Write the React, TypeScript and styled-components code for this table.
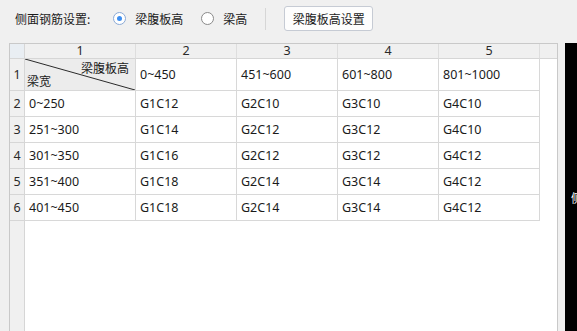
import React from 'react';
import styled, {createGlobalStyle} from 'styled-components';

const GlobalStyle = createGlobalStyle`
    html, body {
        margin: 0;
        padding: 0;
        background: #f0f0f0;
        overflow: hidden;
    }
    body {
        font-family: "Noto Sans CJK SC", "Noto Sans", sans-serif;
        color: #1b1b1b;
    }
`

const CJK = `"Noto Sans CJK SC", sans-serif`
const LATIN = `"Noto Sans", "Noto Sans CJK SC", sans-serif`

const HEADS = ['1', '2', '3', '4', '5']
const ROWS = [
    ['0~250', 'G1C12', 'G2C10', 'G3C10', 'G4C10'],
    ['251~300', 'G1C14', 'G2C12', 'G3C12', 'G4C10'],
    ['301~350', 'G1C16', 'G2C12', 'G3C12', 'G4C12'],
    ['351~400', 'G1C18', 'G2C14', 'G3C14', 'G4C12'],
    ['401~450', 'G1C18', 'G2C14', 'G3C14', 'G4C12'],
]
const RANGES = ['0~450', '451~600', '601~800', '801~1000']

const Page = styled.div`
    display: flex;
    flex-direction: column;
    width: 577px;
    height: 331px;
`

const Toolbar = styled.div`
    display: flex;
    align-items: center;
    height: 37px;
    padding: 0 0 0 15px;
    margin-bottom: 6px;
    font-family: ${CJK};
    font-size: 12px;
`

const Label = styled.span`
    margin-right: 23px;
`

const RadioOption = styled.label`
    display: flex;
    align-items: center;
    gap: 9px;
    margin-right: 18px;
`

const RadioCircle = styled.span<{ $checked?: boolean }>`
    width: 11px;
    height: 11px;
    border-radius: 50%;
    border: 1px solid ${p => p.$checked ? '#8aa9d6' : '#8a8a8a'};
    background: #fff;
    display: flex;
    align-items: center;
    justify-content: center;

    &::after {
        content: '';
        width: 5px;
        height: 5px;
        border-radius: 50%;
        background: ${p => p.$checked ? '#3d8ef0' : 'transparent'};
    }
`

const Divider = styled.span`
    width: 1px;
    height: 22px;
    background: #d6d6d6;
    margin: 0 18px 0 0;
`

const Button = styled.button`
    height: 25px;
    width: 89px;
    padding: 0;
    border: 1px solid #c6cbd4;
    border-radius: 3px;
    background: #fdfdfd;
    font-family: ${CJK};
    font-size: 12px;
    color: #1b1b1b;
`

const Body = styled.div`
    display: flex;
    flex: 1;
    min-height: 0;
`

const GridFrame = styled.div`
    margin-left: 9px;
    width: 550px;
    height: 300px;
    box-sizing: border-box;
    border: 1px solid #c9c9c9;
    background: #fff;
    display: grid;
    grid-template-columns: 15px 111px repeat(4, 101px) 1fr;
    grid-template-rows: 15px 32px repeat(5, 26px) 1fr;
    font-family: ${LATIN};
    font-size: 12.5px;
`

const Corner = styled.div`
    background: #e9eef3;
    border-right: 1px solid #d6d6d6;
    border-bottom: 1px solid #d6d6d6;
`

const HeadCell = styled.div<{ $filler?: boolean }>`
    background: #f0f0f0;
    border-right: ${p => p.$filler ? 'none' : '1px solid #dedede'};
    border-bottom: 1px solid #d6d6d6;
    display: flex;
    align-items: center;
    justify-content: center;
    color: #2a2a2a;
    font-size: 12.5px;
    line-height: 1;
`

const RowHead = styled.div`
    background: #f0f0f0;
    border-right: 1px solid #d6d6d6;
    border-bottom: 1px solid #d6d6d6;
    display: flex;
    align-items: center;
    justify-content: center;
    color: #2a2a2a;
`

const RowHeadFiller = styled.div`
    background: #f0f0f0;
    border-right: 1px solid #d6d6d6;
`

const Cell = styled.div<{ $filler?: boolean }>`
    border-right: ${p => p.$filler ? 'none' : '1px solid #d8d8d8'};
    border-bottom: ${p => p.$filler ? 'none' : '1px solid #d8d8d8'};
    display: flex;
    align-items: center;
    padding-left: 4px;
    white-space: nowrap;
`

const DiagonalCell = styled.div`
    position: relative;
    background: #ececec;
    border-right: 1px solid #d8d8d8;
    border-bottom: 1px solid #d8d8d8;
    font-family: ${CJK};
    font-size: 12px;
`

const DiagLine = styled.svg`
    position: absolute;
    inset: 0;
    width: 100%;
    height: 100%;
`

const DiagTop = styled.span`
    position: absolute;
    right: 6px;
    top: 0;
    line-height: 18px;
`

const DiagBottom = styled.span`
    position: absolute;
    left: 2px;
    bottom: 0;
    line-height: 18px;
`

const SidePanel = styled.div`
    margin-left: 7px;
    width: 12px;
    height: 300px;
    background: #000;
    overflow: hidden;
    display: flex;
    align-items: flex-start;
    padding-top: 146px;
    box-sizing: border-box;
`

const SideText = styled.span`
    color: #fff;
    font-family: ${CJK};
    font-size: 12px;
    margin-left: 6px;
    white-space: nowrap;
`

export default function App() {
    return (
        <Page>
            <GlobalStyle/>
            <Toolbar>
                <Label>侧面钢筋设置:</Label>
                <RadioOption><RadioCircle $checked/>梁腹板高</RadioOption>
                <RadioOption><RadioCircle/>梁高</RadioOption>
                <Divider/>
                <Button>梁腹板高设置</Button>
            </Toolbar>
            <Body>
                <GridFrame>
                    <Corner/>
                    {HEADS.map(h => <HeadCell key={h}>{h}</HeadCell>)}
                    <HeadCell $filler/>

                    <RowHead>1</RowHead>
                    <DiagonalCell>
                        <DiagLine viewBox="0 0 110 31" preserveAspectRatio="none">
                            <line x1="0" y1="0" x2="110" y2="31" stroke="#2a2a2a" strokeWidth="1"/>
                        </DiagLine>
                        <DiagTop>梁腹板高</DiagTop>
                        <DiagBottom>梁宽</DiagBottom>
                    </DiagonalCell>
                    {RANGES.map(r => <Cell key={r}>{r}</Cell>)}
                    <Cell $filler/>

                    {ROWS.map((row, i) => (
                        <React.Fragment key={i}>
                            <RowHead>{i + 2}</RowHead>
                            {row.map((v, j) => <Cell key={j}>{v}</Cell>)}
                            <Cell $filler/>
                        </React.Fragment>
                    ))}

                    <RowHeadFiller/>
                </GridFrame>
                <SidePanel>
                    <SideText>侧</SideText>
                </SidePanel>
            </Body>
        </Page>
    );
}
